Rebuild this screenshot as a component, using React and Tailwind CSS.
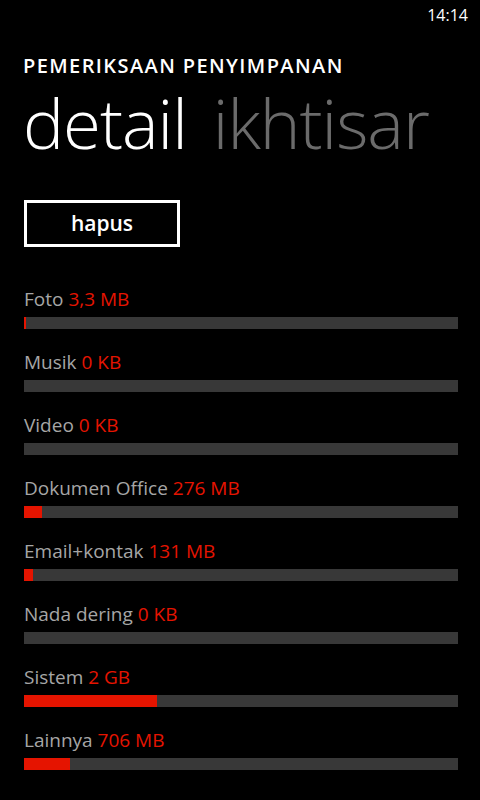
const items = [
  { label: 'Foto', value: '3,3 MB', fill: 2 },
  { label: 'Musik', value: '0 KB', fill: 0 },
  { label: 'Video', value: '0 KB', fill: 0 },
  { label: 'Dokumen Office', value: '276 MB', fill: 18 },
  { label: 'Email+kontak', value: '131 MB', fill: 9 },
  { label: 'Nada dering', value: '0 KB', fill: 0 },
  { label: 'Sistem', value: '2 GB', fill: 133 },
  { label: 'Lainnya', value: '706 MB', fill: 46 },
];

const App = () => {
  return (
    <div className="w-[480px] h-[800px] bg-black text-white overflow-hidden" style={{ fontFamily: '"Open Sans", "Noto Sans", sans-serif' }}>
      {/* Status bar */}
      <div className="h-[30px] flex items-center justify-end pr-[12px]">
        <span className="text-[16px] leading-none">14:14</span>
      </div>

      {/* Header */}
      <div className="pl-[23px]">
        <div className="mt-[24px] text-[20px] font-semibold leading-[24px] tracking-[1.4px]">PEMERIKSAAN PENYIMPANAN</div>
        <div className="mt-[6px] flex gap-[26px] text-[69px] font-light leading-[76px] tracking-[-1px]">
          <span>detail</span>
          <span className="text-[#6b6b6b]">ikhtisar</span>
        </div>
      </div>

      {/* Button */}
      <div className="pl-[24px] mt-[40px]">
        <button className="w-[156px] h-[47px] border-[3px] border-white text-[21px] font-semibold flex items-center justify-center">
          hapus
        </button>
      </div>

      {/* Storage list */}
      <div className="px-[24px] mt-[40px] w-[482px]">
        {items.map((item) => (
          <div key={item.label} className="h-[63px]">
            <div className="text-[19px] leading-[24px] whitespace-nowrap">
              <span className="text-[#a6a6a6]">{item.label}</span>{' '}
              <span className="text-[#e51400]">{item.value}</span>
            </div>
            <div className="mt-[6px] h-[12px] w-[434px] bg-[#383838] flex">
              <div className="h-full bg-[#e51400]" style={{ width: item.fill }} />
            </div>
          </div>
        ))}
      </div>
    </div>
  );
};

export default App;
